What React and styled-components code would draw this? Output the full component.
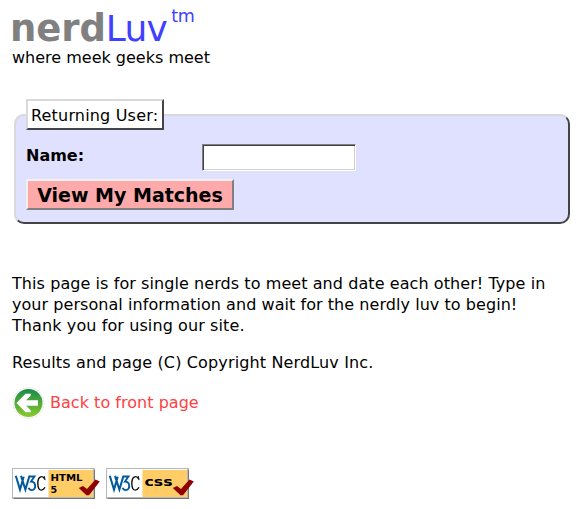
import React from "react";
import styled, { createGlobalStyle } from "styled-components";

const GlobalStyle = createGlobalStyle`
  body { margin: 0; background: #fff; color: #000; font: 16px/21px Verdana, "DejaVu Sans", sans-serif; }
`;
const Page = styled.main`
  box-sizing: border-box; width: 581px; height: 509px; padding: 8px 11px 0 12px;
  display: flex; flex-direction: column; overflow: hidden;
`;
const Brand = styled.h1`
  display: flex; align-items: flex-start; height: 39px; margin: 0 0 0 -2px;
  font-size: 37px; line-height: 41px; font-weight: 400; color: #4040ff; white-space: nowrap;
`;
const Nerd = styled.b`color: #808080; font-size: 37px; letter-spacing: -0.1px;`;
const Luv = styled.span`font-size: 36px; letter-spacing: -0.7px;`;
const Trademark = styled.sup`font-size: 17.5px; line-height: 16px; margin-left: 4px; vertical-align: baseline; letter-spacing: -0.4px;`;
const Line = styled.span`
  display: block; white-space: nowrap; letter-spacing: ${p => p.$spacing || 0}px;
`;
const Fieldset = styled.fieldset`
  box-sizing: border-box; width: 556px; height: 125px; margin: 31px 0 0 2px; padding: 0 10px;
  border: 2px solid; border-color: #d9d9d9 #444 #444 #d9d9d9;
  border-radius: 10px; background: #e0e0ff;
`;
const Legend = styled.legend`
  box-sizing: border-box; width: 138px; height: 31px; padding: 4px 3px; line-height: 21px;
  border: 2px solid; border-color: #d9d9d9 #444 #444 #d9d9d9; background: #fff;
`;
const NameRow = styled.label`
  display: flex; align-items: flex-start; height: 36px; padding-top: 14px; box-sizing: border-box;
`;
const NameLabel = styled.strong`width: 176px; line-height: 23px;`;
const NameInput = styled.input`
  box-sizing: border-box; width: 154px; height: 27px; padding: 1px 3px; outline: 0; font: inherit;
  border: 1px solid; border-color: #808080 #fff #fff #808080; border-radius: 0; background: #fff;
  box-shadow: inset 1px 1px #404040, inset -1px -1px #d4d0c8;
`;
const SubmitButton = styled.button`
  display: block; box-sizing: border-box; width: 208px; height: 31px; margin-top: 13px; padding: 1px 0 0;
  border: 2px solid; border-color: #f0f0ee #808080 #808080 #f0f0ee; border-radius: 0;
  background: #ffaaaa; color: #000; font: bold 19px/26px Verdana, "DejaVu Sans", sans-serif;
  white-space: nowrap;
`;
const Paragraph = styled.p`margin: ${p => p.$top}px 0 0;`;
const BackLink = styled.a`
  display: flex; align-items: flex-start; gap: 5px; height: 33px; margin-top: 14px;
  line-height: 31px; color: #ff4040; text-decoration: none;
`;
const BackIcon = styled.svg`display: block; width: 33px; height: 33px;`;
const Badges = styled.div`display: flex; gap: 6px; margin-top: 48px;`;
const BadgeSvg = styled.svg`display: block; width: 88px; height: 31px;`;

function Badge({ kind }) {
  return (
    <BadgeSvg viewBox="0 0 88 31" aria-label={`W3C ${kind}`}>
      <path d="M0 0H83V31H0Z" fill="#b8b8b8" />
      <path d="M1 1H81V29H1Z" fill="#fff" />
      <path d="M36.5 2H81V29H36.5Z" fill="#fc6" />
      <path d="M2 30.5H83M82.5 2V31" stroke="#777" fill="none" />
      <g fill="none" strokeLinejoin="miter" transform="translate(0 1.2) scale(1 .95)">
        <path d="M3.8 7L8 21.5L11.7 8M9 7L13.4 21.5L17.5 7" stroke="#005a9c" strokeWidth="2" />
        <path d="M17 7.7H22.5L19 13C24.5 13 24.5 22 19.8 22Q17.5 22 16.6 19.5" stroke="#005a9c" strokeWidth="1.9" />
        <path d="M32.8 10.5Q31.2 7.2 28.7 8Q25.8 9 25.8 15Q26 22 29.3 22Q31.5 22 33 19" stroke="#111" strokeWidth="1.4" />
        <path d="M32.3 7.2L33 11.5" stroke="#111" strokeWidth="1" />
      </g>
      {kind === "HTML5" ? (
        <g fill="#000" fontFamily="Verdana, DejaVu Sans, sans-serif" fontWeight="bold" fontSize="9.5">
          <text x="38.5" y="13" textLength="32" lengthAdjust="spacingAndGlyphs">HTML</text>
          <text x="38.5" y="24.7">5</text>
        </g>
      ) : (
        <text x="38.5" y="18" fontFamily="Verdana, DejaVu Sans, sans-serif" fontWeight="bold" fontSize="11.5" textLength="28" lengthAdjust="spacingAndGlyphs">css</text>
      )}
      <path d="M66.8 20L71 18L75 21L83.5 11.5L87.8 13.5L77 27.3L74.5 27.3Z" fill="#900000" />
    </BadgeSvg>
  );
}

export default function App() {
  return (
    <>
      <GlobalStyle />
      <Page>
        <Brand><Nerd>nerd</Nerd><Luv>Luv</Luv><Trademark>tm</Trademark></Brand>
        <Line>where meek geeks meet</Line>
        <Fieldset>
          <Legend><Line $spacing={0.18}>Returning User:</Line></Legend>
          <NameRow><NameLabel>Name:</NameLabel><NameInput type="text" aria-label="Name" /></NameRow>
          <SubmitButton type="button">View My Matches</SubmitButton>
        </Fieldset>
        <Paragraph $top={49}>
          <Line $spacing={0.075}>This page is for single nerds to meet and date each other! Type in</Line>
          <Line $spacing={0.055}>your personal information and wait for the nerdly luv to begin!</Line>
          <Line $spacing={0.1}>Thank you for using our site.</Line>
        </Paragraph>
        <Paragraph $top={16}><Line $spacing={0.14}>Results and page (C) Copyright NerdLuv Inc.</Line></Paragraph>
        <BackLink href="#front">
          <BackIcon viewBox="0 0 33 33">
            <defs><linearGradient id="green" x2="0" y2="1"><stop stopColor="#198b4d" /><stop offset=".4" stopColor="#46a43c" /><stop offset="1" stopColor="#8bcc2c" /></linearGradient></defs>
            <circle cx="16.5" cy="16" r="15.4" fill="#fff" stroke="#ddd" strokeWidth=".8" strokeDasharray="2 1" />
            <circle cx="16.5" cy="16" r="14" fill="url(#green)" />
            <path d="M4.5 16L13.5 6.8H18.8V8.5L14.2 13.2H26V18.8H14.2L18.8 23.5V25.2H13.5Z" fill="#fff" />
          </BackIcon>
          <Line $spacing={0.03}>Back to front page</Line>
        </BackLink>
        <Badges><Badge kind="HTML5" /><Badge kind="CSS" /></Badges>
      </Page>
    </>
  );
}
